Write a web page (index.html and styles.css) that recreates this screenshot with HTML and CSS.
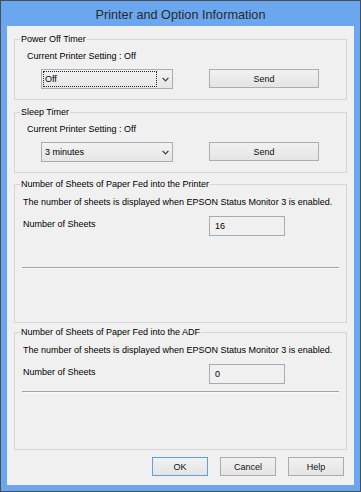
FILE: index.html
```html
<!DOCTYPE html>
<html>
<head>
<meta charset="utf-8">
<link rel="stylesheet" href="styles.css">
</head>
<body>
<div class="window">
  <div class="titlebar">Printer and Option Information</div>
  <div class="client">
    <div class="group g-timer">
      <div class="legend">Power Off Timer</div>
      <div class="setting">Current Printer Setting : Off</div>
      <div class="row">
        <div class="combo">
          <div class="combo-text"><div class="ring focused">Off</div></div>
          <div class="combo-arrow"><svg width="7" height="5" viewBox="0 0 7 5"><polyline points="0.6,0.8 3.5,3.8 6.4,0.8" fill="none" stroke="#3a3a3a" stroke-width="1.2"/></svg></div>
        </div>
        <div class="btn send">Send</div>
      </div>
    </div>
    <div class="group g-timer">
      <div class="legend">Sleep Timer</div>
      <div class="setting">Current Printer Setting : Off</div>
      <div class="row">
        <div class="combo">
          <div class="combo-text"><div class="ring">3 minutes</div></div>
          <div class="combo-arrow"><svg width="7" height="5" viewBox="0 0 7 5"><polyline points="0.6,0.8 3.5,3.8 6.4,0.8" fill="none" stroke="#3a3a3a" stroke-width="1.2"/></svg></div>
        </div>
        <div class="btn send">Send</div>
      </div>
    </div>
    <div class="group g-printer">
      <div class="legend">Number of Sheets of Paper Fed into the Printer</div>
      <div class="sentence">The number of sheets is displayed when EPSON Status Monitor 3 is enabled.</div>
      <div class="count-row">
        <div class="count-label">Number of Sheets</div>
        <div class="field">16</div>
      </div>
      <div class="sep sep-printer"></div>
    </div>
    <div class="group g-adf">
      <div class="legend">Number of Sheets of Paper Fed into the ADF</div>
      <div class="sentence">The number of sheets is displayed when EPSON Status Monitor 3 is enabled.</div>
      <div class="count-row">
        <div class="count-label">Number of Sheets</div>
        <div class="field">0</div>
      </div>
      <div class="sep sep-adf"></div>
    </div>
    <div class="actions">
      <div class="btn dbtn ok">OK</div>
      <div class="btn dbtn">Cancel</div>
      <div class="btn dbtn">Help</div>
    </div>
  </div>
</div>
</body>
</html>
```

FILE: styles.css
```css
* {
  box-sizing: border-box;
  margin: 0;
  padding: 0;
}

html, body {
  width: 361px;
  height: 492px;
  overflow: hidden;
  background: #ffffff;
}

body {
  font-family: "Liberation Sans", Arial, sans-serif;
  font-size: 9px;
  color: #000000;
}

.window {
  width: 361px;
  height: 492px;
  border: 1px solid #4b4f55;
  background: #6ba7ef;
  padding: 0 6px 6px;
  display: flex;
  flex-direction: column;
}

.titlebar {
  height: 25px;
  flex: none;
  display: flex;
  align-items: center;
  justify-content: center;
  font-size: 12.7px;
  color: #2a2a2a;
  padding-top: 2px;
}

.client {
  flex: 1;
  background: #f0f0f0;
  padding: 13px 7px 0;
  display: flex;
  flex-direction: column;
}

.group {
  border: 1px solid #d6d6d6;
  display: flex;
  flex-direction: column;
  flex: none;
}

.g-timer {
  height: 61px;
}

.g-timer + .g-timer {
  margin-top: 12px;
}

.g-printer {
  height: 139px;
  margin-top: 11px;
}

.g-adf {
  height: 118px;
  margin-top: 9px;
}

.legend {
  align-self: flex-start;
  height: 11px;
  line-height: 11px;
  margin: -6px 0 0 5px;
  padding: 0 1px;
  background: #f0f0f0;
  white-space: nowrap;
}

.setting {
  line-height: 12px;
  margin: 5px 0 0 12px;
}

.row {
  display: flex;
  gap: 36px;
  margin: 7px 0 0 26px;
}

.combo {
  width: 132px;
  height: 20px;
  border: 1px solid #acacac;
  background: linear-gradient(#f2f2f2, #e6e6e6);
  display: flex;
}

.combo-text {
  width: 116px;
  height: 100%;
  padding: 1px;
  display: flex;
}

.ring {
  flex: 1;
  border: 1px dotted transparent;
  display: flex;
  align-items: center;
  padding-left: 1px;
}

.ring.focused {
  border-color: #222222;
}

.combo-arrow {
  flex: 1;
  display: flex;
  align-items: center;
  justify-content: center;
  padding-top: 1px;
}

.btn {
  height: 19px;
  border: 1px solid #acacac;
  background: linear-gradient(#f1f1f1, #e4e4e4);
  display: flex;
  align-items: center;
  justify-content: center;
  color: #111111;
}

.send {
  width: 110px;
}

.sentence {
  line-height: 12px;
  margin: 6px 0 0 8px;
  white-space: nowrap;
}

.count-row {
  display: flex;
  margin-top: 8px;
}

.count-label {
  width: 194px;
  padding: 2px 0 0 8px;
  line-height: 12px;
}

.field {
  width: 76px;
  height: 20px;
  border: 1px solid #a9abb0;
  background: #f0f0f0;
  padding-left: 5px;
  line-height: 18px;
}

.sep {
  height: 2px;
  border-top: 1px solid #a3a3a3;
  border-bottom: 1px solid #fbfbfb;
  margin: 0 7px;
}

.sep-printer {
  margin-top: 31px;
}

.sep-adf {
  margin-top: 7px;
}

.actions {
  display: flex;
  justify-content: flex-end;
  gap: 12px;
  margin-top: 7px;
  padding-right: 3px;
}

.dbtn {
  width: 56px;
}

.ok {
  border-color: #5e9fe2;
}
```
